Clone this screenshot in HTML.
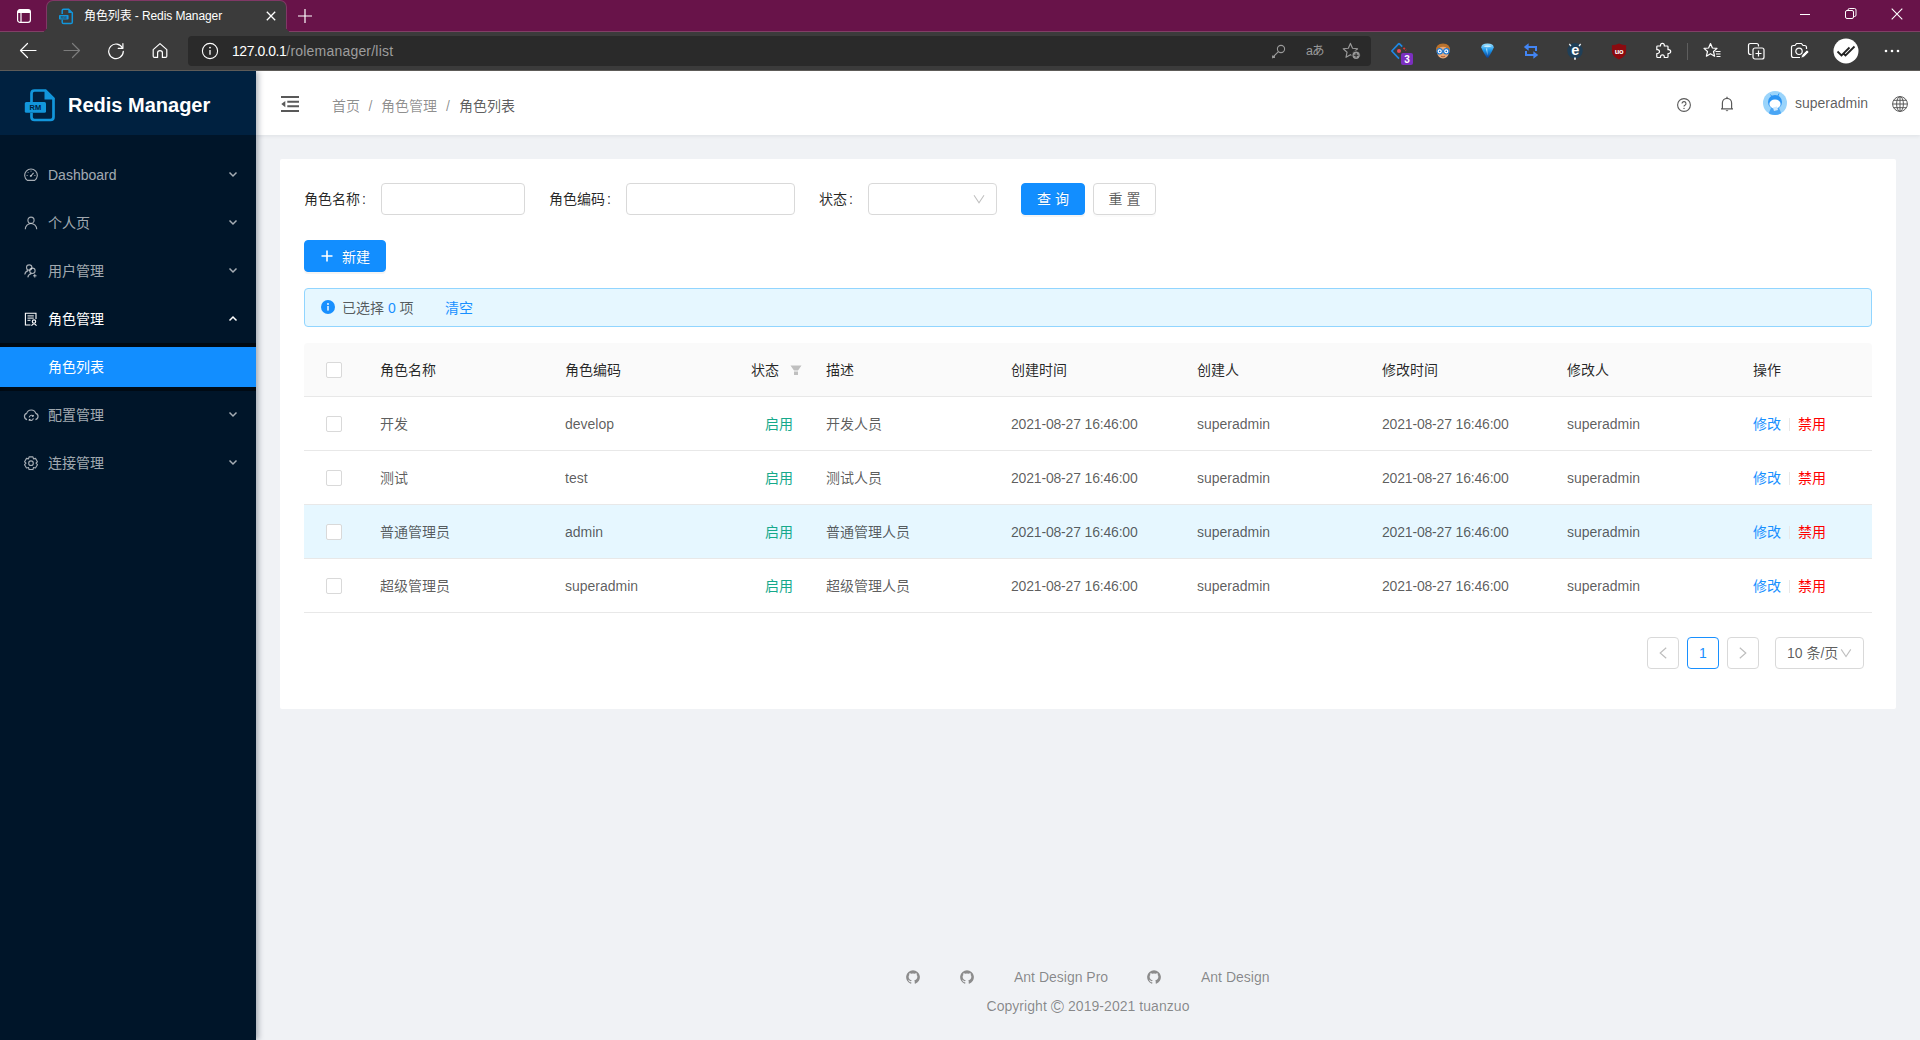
<!DOCTYPE html>
<html lang="zh-CN">
<head>
<meta charset="utf-8">
<title>角色列表 - Redis Manager</title>
<style>
*{box-sizing:border-box;margin:0;padding:0}
html,body{width:1920px;height:1040px;overflow:hidden;background:#f0f2f5}
body{font-family:"Liberation Sans","Noto Sans CJK SC",sans-serif;font-size:14px;color:rgba(0,0,0,.65);position:relative}
.abs{position:absolute}
svg{display:block}
/* ---------- browser chrome ---------- */
#titlebar{position:absolute;left:0;top:0;width:1920px;height:32px;background:#681349;border-bottom:1px solid #804066}
#tab{position:absolute;left:47px;top:1px;width:239px;height:31px;background:#3b3b3b;border-radius:6px 6px 0 0;box-shadow:0 0 0 1px rgba(255,255,255,.16)}
#tab:before,#tab:after{content:"";position:absolute;bottom:0;width:6px;height:6px}
#tab:before{left:-6px;background:radial-gradient(circle at 0 0,transparent 6px,#3b3b3b 6.5px)}
#tab:after{right:-6px;background:radial-gradient(circle at 100% 0,transparent 6px,#3b3b3b 6.5px)}
#tabtitle{position:absolute;left:37px;top:0;height:31px;line-height:30px;font-size:12px;color:#fff;white-space:nowrap;letter-spacing:-.1px}
#toolbar{position:absolute;left:0;top:32px;width:1920px;height:39px;background:#3b3b3b;border-bottom:1px solid #5d5b58;z-index:10}
#urlbar{position:absolute;left:188px;top:4px;width:1183px;height:30px;background:#2a2a2a;border-radius:4px}
#url{position:absolute;left:44px;top:0;line-height:30px;font-size:14px;color:#9d9d9d;white-space:nowrap}
#url{letter-spacing:.2px}#url b{font-weight:normal;color:#fff;letter-spacing:-.45px}
/* ---------- app ---------- */
#sider{position:absolute;left:0;top:71px;width:256px;height:969px;background:#001529;box-shadow:2px 0 6px rgba(0,21,41,.35);z-index:5}
#logo{position:absolute;left:0;top:0;width:256px;height:64px;background:#002140}
#logo h1{position:absolute;left:68px;top:0;line-height:69px;font-size:20px;font-weight:bold;color:#fff;white-space:nowrap}
.mi{position:absolute;left:0;width:256px;height:40px;line-height:40px;color:rgba(255,255,255,.65);font-size:14px}
.mi .tx{position:absolute;left:48px;top:0;white-space:nowrap}
.mi .ic{position:absolute;left:24px;top:13px;width:14px;height:14px}
.mi .ar{position:absolute;left:228px;top:16px;width:10px;height:8px}
.mi.on{color:#fff}
#sub{position:absolute;left:0;top:272px;width:256px;height:48px;background:#000c17;box-shadow:inset 0 2px 8px rgba(0,0,0,.45)}
#sel{position:absolute;left:0;top:276px;width:256px;height:40px;background:#128eff;color:#fff;line-height:40px;padding-left:48px}
#header{position:absolute;left:256px;top:71px;width:1664px;height:64px;background:#fff;box-shadow:0 1px 4px rgba(0,21,41,.08);z-index:4}
#bc{position:absolute;left:76px;top:0;line-height:71px;font-size:14px;color:rgba(0,0,0,.45);white-space:nowrap}
#bc i{font-style:normal;display:inline-block;text-align:center;width:21px;color:rgba(0,0,0,.45)}#bc i+b,#bc i.w{}
#bc b{font-weight:normal;color:rgba(0,0,0,.65)}
#uname{position:absolute;left:1539px;top:0;line-height:64px;font-size:14px;color:rgba(0,0,0,.65)}
#card{position:absolute;left:280px;top:159px;width:1616px;height:550px;background:#fff;border-radius:2px}

/* ---------- card content ---------- */
.lb{position:absolute;top:24px;line-height:33px;color:rgba(0,0,0,.85);white-space:nowrap}
.inp{position:absolute;top:24px;height:32px;border:1px solid #d9d9d9;border-radius:4px;background:#fff}
.btn{position:absolute;height:32px;line-height:30px;border-radius:4px;border:1px solid #d9d9d9;text-align:center;white-space:nowrap;background:#fff;color:rgba(0,0,0,.65);box-shadow:0 2px 0 rgba(0,0,0,.015)}
.btn.pr{background:#128eff;border-color:#128eff;color:#fff;text-shadow:0 -1px 0 rgba(0,0,0,.12);box-shadow:0 2px 0 rgba(0,0,0,.045)}
#alert{position:absolute;left:24px;top:129px;width:1568px;height:39px;background:#e6f7ff;border:1px solid #91d5ff;border-radius:4px;line-height:39px;color:rgba(0,0,0,.65)}
#alert .t{position:absolute;left:37px;top:0;white-space:nowrap}
#alert .t em{font-style:normal;color:#1890ff}
#alert .c{position:absolute;left:140px;top:0;color:#1890ff}
#tbl{position:absolute;left:24px;top:184px;width:1568px}
.tr{position:relative;height:54px;border-bottom:1px solid #e8e8e8;line-height:55px;width:1568px}
.tr.h{background:#fafafa;border-radius:4px 4px 0 0;color:rgba(0,0,0,.85)}
.tr.hv{background:#e6f7ff}
.tr span{position:absolute;top:0;white-space:nowrap}
.tr .cb{position:absolute;left:22px;top:19px;width:16px;height:16px;border:1px solid #d9d9d9;border-radius:2px;background:#fff}
.c1{left:76px}.c2{left:261px}.c3{right:1079px}.c4{left:522px}.c5{left:707px}.c6{left:893px}.c7{left:1078px}.c8{left:1263px}.c9{left:1449px}
.tr.h .c3{right:1093px}
.ed{color:#1890ff}.dl{color:#f00}.dt{letter-spacing:-.18px}
.dv{display:inline-block;width:1px;height:13px;background:#e8e8e8;margin:0 8px;vertical-align:-2px}
.pg{position:absolute;top:478px;height:32px;border:1px solid #d9d9d9;border-radius:4px;background:#fff;line-height:30px;text-align:center}

#footer{position:absolute;left:256px;top:960px;width:1664px;color:rgba(0,0,0,.45);font-size:14px}
#footer .fl{position:absolute;left:758px;top:6px;height:22px;line-height:22px}
#footer .fl span{position:absolute;top:0;white-space:nowrap}
#footer .cp{position:absolute;left:0;width:1664px;text-align:center;top:35px;line-height:22px}
#footer .cp{letter-spacing:.05px}#footer .cc{font-size:18px;line-height:14px;vertical-align:-2px;letter-spacing:0}
.cl{margin-left:2px}
</style>
</head>
<body>
<!-- browser chrome -->
<div id="titlebar">

  <svg class="abs" style="left:16px;top:8px" width="16" height="16" viewBox="0 0 16 16"><rect x="1.600" y="1.600" width="12.800" height="12.800" rx="2.400" fill="none" stroke="#fff" stroke-width="1.200"/><path d="M1.600 4.200Q1.600 1.600 4 1.600H12Q14.400 1.600 14.400 4.200V5H1.600Z" fill="#fff"/><path d="M5 5V14.400" stroke="#fff" stroke-width="1.200"/></svg>
  <svg class="abs" style="left:297px;top:8px" width="16" height="16" viewBox="0 0 16 16"><path d="M8 1V15M1 8H15" stroke="#fff" stroke-width="1.2"/></svg>
  <svg class="abs" style="left:1799px;top:9px" width="12" height="12" viewBox="0 0 12 12"><path d="M1 5.5H11" stroke="#fff" stroke-width="1"/></svg>
  <svg class="abs" style="left:1845px;top:8px" width="12" height="12" viewBox="0 0 12 12"><rect x="0.5" y="2.5" width="8" height="8" rx="1.5" fill="none" stroke="#fff"/><path d="M3 2.5V2Q3 .5 4.5 .5H9.5Q11 .5 11 2V7Q11 8.5 9.5 8.5H9" fill="none" stroke="#fff"/></svg>
  <svg class="abs" style="left:1891px;top:8px" width="12" height="12" viewBox="0 0 12 12"><path d="M.7 .7L11.3 11.3M11.3 .7L.7 11.3" stroke="#fff" stroke-width="1.1"/></svg>
  <div id="tab"><svg class="abs" style="left:11px;top:7px" width="16" height="17" viewBox="0 0 16 17"><path d="M4.2 6V2.6Q4.2 1.2 5.6 1.2H10.6L14.3 4.9V14.2Q14.3 15.6 12.9 15.6H5.6Q4.2 15.6 4.2 14.2V11.8" fill="none" stroke="#1296db" stroke-width="1.5"/><path d="M10.4 1.2V5.1H14.3Z" fill="#1296db"/><rect x="1" y="6.900" width="9.600" height="4.600" rx=".8" fill="#1296db"/><text x="5.800" y="10.600" font-family="Liberation Sans,sans-serif" font-size="4" font-weight="bold" fill="#2a4a66" text-anchor="middle">RM</text></svg>
<svg class="abs" style="left:219px;top:10px" width="10" height="10" viewBox="0 0 10 10"><path d="M.8 .8L9.2 9.2M9.2 .8L.8 9.2" stroke="#fff" stroke-width="1.3"/></svg><div id="tabtitle">角色列表 - Redis Manager</div></div>
</div>
<div id="toolbar">

  <svg class="abs" style="left:19px;top:10px" width="18" height="17" viewBox="0 0 18 17"><path d="M1.5 8.5H17M8.5 1.5L1.5 8.5L8.5 15.5" fill="none" stroke="#fff" stroke-width="1.2" stroke-linecap="round" stroke-linejoin="round"/></svg>
  <svg class="abs" style="left:63px;top:10px" width="18" height="17" viewBox="0 0 18 17"><path d="M16.5 8.5H1M9.5 1.5L16.5 8.5L9.5 15.5" fill="none" stroke="#7c7c7c" stroke-width="1.2" stroke-linecap="round" stroke-linejoin="round"/></svg>
  <svg class="abs" style="left:107px;top:10px" width="18" height="18" viewBox="0 0 18 18"><path d="M15.6 6.2A7.3 7.3 0 1 0 16.3 9.3" fill="none" stroke="#fff" stroke-width="1.2" stroke-linecap="round"/><path d="M15.9 1.6V6.3H11.2" fill="none" stroke="#fff" stroke-width="1.2" stroke-linecap="round" stroke-linejoin="round"/></svg>
  <svg class="abs" style="left:152px;top:10px" width="16" height="17" viewBox="0 0 16 17"><path d="M1.2 7.6L8 1.6L14.8 7.6V14.2Q14.8 15.4 13.6 15.4H10.4V10.8Q10.4 8.6 8 8.6Q5.6 8.6 5.6 10.8V15.4H2.4Q1.2 15.4 1.2 14.2Z" fill="none" stroke="#fff" stroke-width="1.2" stroke-linejoin="round"/></svg>

  <!-- extension icons -->
  <svg class="abs" style="left:1389px;top:8px" width="26" height="26" viewBox="0 0 26 26"><path d="M10 3.400L2.800 11L10 18.600" fill="none" stroke="#1e88e5" stroke-width="1.700" stroke-linejoin="round"/><path d="M10 3.400L13.200 6.600" stroke="#1e88e5" stroke-width="1.700"/><path d="M14.500 7.800L17 10.500" stroke="#e53935" stroke-width="1.700" stroke-dasharray="2 1.200"/><circle cx="10" cy="11" r="2" fill="#ef4a5a"/><rect x="12" y="13" width="12" height="12" rx="2" fill="#7b2fbf"/><text x="18" y="22.600" font-family="Liberation Sans,sans-serif" font-size="10" font-weight="bold" fill="#fff" text-anchor="middle">3</text></svg>
  <svg class="abs" style="left:1435px;top:10px" width="16" height="18" viewBox="0 0 16 18"><path d="M1 9Q.5 1.500 8 1.500Q15.500 1.500 15 9L14 11H2Z" fill="#b9722e"/><ellipse cx="8" cy="10.500" rx="5.800" ry="6" fill="#e9a877"/><path d="M2.500 6.500Q8 2.500 13.500 6.500L13 4Q8 1.800 3 4Z" fill="#b9722e"/><circle cx="4.700" cy="9.300" r="2.700" fill="#fff" stroke="#1976d2" stroke-width="1.200"/><circle cx="11.300" cy="9.300" r="2.700" fill="#fff" stroke="#1976d2" stroke-width="1.200"/><circle cx="4.700" cy="9.300" r=".9" fill="#1565c0"/><circle cx="11.300" cy="9.300" r=".9" fill="#1565c0"/><path d="M6 14.300Q8 15.300 10 14.300" fill="none" stroke="#a0522d" stroke-width=".8"/></svg>
  <svg class="abs" style="left:1480px;top:11px" width="15" height="16" viewBox="0 0 15 16"><defs><linearGradient id="gm" x1="0" y1="0" x2="0" y2="1"><stop offset="0" stop-color="#9be0ff"/><stop offset=".45" stop-color="#1e9bf0"/><stop offset="1" stop-color="#0a3f95"/></linearGradient></defs><path d="M1.200 4.600Q1.400 .6 7.500 .6Q13.600 .6 13.800 4.600Q12 9 8.300 14.800H6.700Q3 9 1.200 4.600Z" fill="url(#gm)"/><path d="M3.500 3.300Q7.500 1 11.500 3.300Q7.500 5 3.500 3.300Z" fill="#d6f3ff" opacity=".85"/><path d="M6 5.500L7.500 12.500L7.200 5.500Z" fill="#e3f6ff" opacity=".8"/></svg>
  <svg class="abs" style="left:1523px;top:10px" width="16" height="18" viewBox="0 0 16 18"><path d="M13 9V5H5" fill="none" stroke="#4285f4" stroke-width="2"/><path d="M.8 5L5.600 1.200V8.800Z" fill="#4285f4"/><path d="M3 9V13H11" fill="none" stroke="#4285f4" stroke-width="2"/><path d="M15.200 13L10.400 9.200V16.800Z" fill="#4285f4"/></svg>
  <svg class="abs" style="left:1566px;top:9px" width="18" height="20" viewBox="0 0 18 20"><circle cx="9" cy="9.800" r="7.700" fill="#1f3f58"/><path d="M3.300 3L5 5M14.700 3L13 5" stroke="#e8eef2" stroke-width="1.300"/><path d="M9 16.500V18.800" stroke="#e8eef2" stroke-width="1.800"/><text x="9.300" y="14.300" font-family="Liberation Sans,sans-serif" font-size="14.500" font-weight="bold" fill="#fff" text-anchor="middle">e</text></svg>
  <svg class="abs" style="left:1611px;top:11px" width="16" height="17" viewBox="0 0 16 17"><path d="M8 .6Q5 2.300 .9 2.300V8Q.9 13.300 8 16.400Q15.100 13.300 15.100 8V2.300Q11 2.300 8 .6Z" fill="#8b0a0f"/><text x="8" y="10.800" font-family="Liberation Sans,sans-serif" font-size="7.500" font-weight="bold" fill="#fff" text-anchor="middle" letter-spacing="-.3">uo</text></svg>
  <svg class="abs" style="left:1654px;top:10px" width="18" height="18" viewBox="0 0 18 18"><path d="M6.500 3.200A1.900 1.900 0 1 1 10.300 3.200V4H13.200Q14 4 14 4.800V7.700H14.800A1.900 1.900 0 1 1 14.800 11.500H14V14.700Q14 15.500 13.200 15.500H10.300V14.700A1.900 1.900 0 1 0 6.500 14.700V15.500H3.600Q2.800 15.500 2.800 14.700V11.500H3.600A1.900 1.900 0 1 0 3.600 7.700H2.800V4.800Q2.800 4 3.600 4H6.500Z" fill="none" stroke="#fff" stroke-width="1.200" stroke-linejoin="round"/></svg>
  <div class="abs" style="left:1687px;top:11px;width:1px;height:17px;background:#5e5e5e"></div>
  <svg class="abs" style="left:1703px;top:10px" width="19" height="18" viewBox="0 0 19 18"><path d="M7.500 1.500L9.400 6L14 6.400L10.500 9.500L11.600 14.200L7.500 11.700L3.400 14.200L4.500 9.500L1 6.400L5.600 6Z" fill="none" stroke="#fff" stroke-width="1.200" stroke-linejoin="round"/><path d="M12.500 9.500H17.500M13 12H17.500M13.500 14.500H17.500" stroke="#fff" stroke-width="1.100"/></svg>
  <svg class="abs" style="left:1747px;top:10px" width="19" height="18" viewBox="0 0 19 18"><path d="M4.500 12.500H3.500Q1.500 12.500 1.500 10.500V3.500Q1.500 1.500 3.500 1.500H9.500Q11.500 1.500 11.500 3.500V4.500" fill="none" stroke="#fff" stroke-width="1.200"/><rect x="6" y="6" width="11" height="11" rx="2" fill="none" stroke="#fff" stroke-width="1.200"/><path d="M11.500 8.500V14.500M8.500 11.500H14.500" stroke="#fff" stroke-width="1.200"/></svg>
  <svg class="abs" style="left:1790px;top:10px" width="20" height="18" viewBox="0 0 20 18"><path d="M10 15.500H3.500Q1.500 15.500 1.500 13.500V5.500Q1.500 3.500 3.500 3.500H5L6.500 1.500H11.500L13 3.500H14.500Q16.500 3.500 16.500 5.500V7" fill="none" stroke="#fff" stroke-width="1.200" stroke-linejoin="round"/><circle cx="9" cy="9.300" r="3.200" fill="none" stroke="#fff" stroke-width="1.200"/><path d="M11 16L12 13L17 8L19 10L14 15Z" fill="#fff" stroke="#3b3b3b" stroke-width=".6"/></svg>
  <svg class="abs" style="left:1833px;top:6px" width="26" height="26" viewBox="0 0 26 26"><circle cx="13" cy="13" r="12.500" fill="#fff"/><path d="M4.500 13.500L8.500 17.500L16.500 9.500M10.500 15.500L12.500 17.500L21.500 8.500" fill="none" stroke="#222" stroke-width="1.800"/></svg>
  <svg class="abs" style="left:1884px;top:17px" width="16" height="4" viewBox="0 0 16 4"><circle cx="2" cy="2" r="1.300" fill="#fff"/><circle cx="8" cy="2" r="1.300" fill="#fff"/><circle cx="14" cy="2" r="1.300" fill="#fff"/></svg>
  <div id="urlbar"><svg class="abs" style="left:13px;top:6px" width="18" height="18" viewBox="0 0 18 18"><circle cx="9" cy="9" r="7.6" fill="none" stroke="#fff" stroke-width="1.1"/><path d="M9 8V12.8" stroke="#fff" stroke-width="1.3"/><circle cx="9" cy="5.6" r=".9" fill="#fff"/></svg>
<svg class="abs" style="left:1083px;top:8px" width="15" height="15" viewBox="0 0 15 15"><circle cx="10" cy="5" r="3.6" fill="none" stroke="#9a9a9a" stroke-width="1.1"/><path d="M7.4 7.6L1.6 13.4V11.6M3.4 11.6V13.4H1.6" fill="none" stroke="#9a9a9a" stroke-width="1.1"/></svg>
<div class="abs" style="left:1118px;top:0;line-height:31px;font-size:12.5px;color:#9a9a9a;letter-spacing:-1px;white-space:nowrap;font-family:'Liberation Sans','Noto Sans CJK JP',sans-serif">aあ</div>
<svg class="abs" style="left:1154px;top:6px" width="20" height="19" viewBox="0 0 19 18"><path d="M8 1.3L10 5.9L14.8 6.4L11.2 9.7L12.2 14.5L8 12L3.8 14.5L4.8 9.7L1.2 6.4L6 5.9Z" fill="none" stroke="#9a9a9a" stroke-width="1.1" stroke-linejoin="round"/><circle cx="13.4" cy="12.6" r="4" fill="#9a9a9a" stroke="#2a2a2a" stroke-width="1"/><path d="M13.4 10.4V14.8M11.2 12.6H15.6" stroke="#2a2a2a" stroke-width="1"/></svg><div id="url"><b>127.0.0.1</b>/rolemanager/list</div></div>
</div>
<!-- sidebar -->
<div id="sider">
  <div id="logo"><svg class="abs" style="left:24px;top:17px" width="33" height="34" viewBox="0 0 33 34"><path d="M7.500 14V5.500Q7.500 2.500 10.500 2.500H21.500L29.500 10.500V29Q29.500 32 26.500 32H10.500Q7.500 32 7.500 29V25" fill="none" stroke="#1296db" stroke-width="2.700"/><path d="M20.500 2V11.500H30Z" fill="#1296db"/><rect x=".8" y="14" width="21.200" height="10.800" rx="1.500" fill="#1296db"/><text x="11.400" y="22.400" font-family="Liberation Sans,sans-serif" font-size="7.500" font-weight="bold" fill="#002140" text-anchor="middle">RM</text></svg><h1>Redis Manager</h1></div>
  <div class="mi" style="top:84px"><svg class="abs" style="left:24px;top:13px" width="14" height="14" viewBox="0 0 14 14" fill="none" stroke="currentColor" stroke-width="1.1"><path d="M3.300 12.400A6.300 6.300 0 1 1 10.700 12.400Z" stroke-linejoin="round"/><path d="M7 7.800L9.600 4.900" stroke-width="1.200"/><circle cx="6.800" cy="8" r="1" fill="currentColor" stroke="none"/><path d="M7 2.600V3.600M2.600 7.500H3.600M10.400 7.500H11.400M3.900 4.300L4.600 5" stroke-width="1"/></svg><span class="tx">Dashboard</span><svg class="abs" style="left:228px;top:16px" width="10" height="7" viewBox="0 0 10 7"><path d="M1.500 1.500L5 5L8.500 1.500" fill="none" stroke="currentColor" stroke-width="1.500"/></svg></div>
  <div class="mi" style="top:132px"><svg class="abs" style="left:24px;top:13px" width="14" height="14" viewBox="0 0 14 14" fill="none" stroke="currentColor" stroke-width="1.1"><circle cx="7" cy="4.200" r="3.100"/><path d="M1.300 13.200A5.700 5.700 0 0 1 12.700 13.200"/></svg><span class="tx">个人页</span><svg class="abs" style="left:228px;top:16px" width="10" height="7" viewBox="0 0 10 7"><path d="M1.500 1.500L5 5L8.500 1.500" fill="none" stroke="currentColor" stroke-width="1.500"/></svg></div>
  <div class="mi" style="top:180px"><svg class="abs" style="left:24px;top:13px" width="14" height="14" viewBox="0 0 14 14" fill="none" stroke="currentColor" stroke-width="1.1"><circle cx="5.200" cy="3.600" r="2.700"/><path d="M.8 10.500A4.600 4.600 0 0 1 4.200 6.600"/><circle cx="8.400" cy="6.800" r="2.700"/><path d="M3.800 13.300A4.700 4.700 0 0 1 7.400 9.600"/><path d="M10.800 10V13.600M9 11.800H12.600" stroke-width="1"/></svg><span class="tx">用户管理</span><svg class="abs" style="left:228px;top:16px" width="10" height="7" viewBox="0 0 10 7"><path d="M1.500 1.500L5 5L8.500 1.500" fill="none" stroke="currentColor" stroke-width="1.500"/></svg></div>
  <div class="mi on" style="top:228px"><svg class="abs" style="left:24px;top:13px" width="14" height="14" viewBox="0 0 14 14" fill="none" stroke="currentColor" stroke-width="1.1"><path d="M6.500 13H1.400V1.200H12V7"/><path d="M3.500 3.900H9.800M3.500 6.100H9.800" stroke-width="1"/><path d="M3.500 8.300H6.500" stroke-width="1"/><circle cx="10" cy="9.600" r="1.700"/><path d="M7.600 13.800A2.500 2.500 0 0 1 12.400 13.800"/></svg><span class="tx">角色管理</span><svg class="abs" style="left:228px;top:16px" width="10" height="7" viewBox="0 0 10 7"><path d="M1.500 5.500L5 2L8.500 5.500" fill="none" stroke="currentColor" stroke-width="1.500"/></svg></div>
  <div id="sub"></div>
  <div id="sel">角色列表</div>
  <div class="mi" style="top:324px"><svg class="abs" style="left:22.5px;top:12.6px" width="16.5" height="15.4" viewBox="-0.5 0 15 14" fill="none" stroke="currentColor" stroke-width="1.1"><path d="M3.200 10.500A2.900 2.900 0 0 1 2.800 4.900A4.400 4.400 0 0 1 11.200 4.900A2.900 2.900 0 0 1 10.800 10.500" /><path d="M5.100 8.600A2.100 2.100 0 0 1 8.800 7.400M8.900 9.400A2.100 2.100 0 0 1 5.200 10.600" stroke-width="1"/><path d="M8.900 6.300V7.600H7.600M5.100 11.700V10.400H6.400" stroke-width=".9"/></svg><span class="tx">配置管理</span><svg class="abs" style="left:228px;top:16px" width="10" height="7" viewBox="0 0 10 7"><path d="M1.500 1.500L5 5L8.500 1.500" fill="none" stroke="currentColor" stroke-width="1.500"/></svg></div>
  <div class="mi" style="top:372px"><svg class="abs" style="left:24px;top:13px" width="14" height="15" viewBox="0 0 14 15" fill="none" stroke="currentColor" stroke-width="1.1"><path d="M8.95 0.89L5.05 0.89L4.52 2.86L4.48 2.88L2.51 2.36L0.56 5.74L2.00 7.18L2.00 7.22L0.56 8.66L2.51 12.04L4.48 11.52L4.52 11.54L5.05 13.51L8.95 13.51L9.48 11.54L9.52 11.52L11.49 12.04L13.44 8.66L12.00 7.22L12.00 7.18L13.44 5.74L11.49 2.36L9.52 2.88L9.48 2.86Z" stroke-linejoin="round"/><circle cx="7" cy="7.200" r="2.300"/></svg><span class="tx">连接管理</span><svg class="abs" style="left:228px;top:16px" width="10" height="7" viewBox="0 0 10 7"><path d="M1.500 1.500L5 5L8.500 1.500" fill="none" stroke="currentColor" stroke-width="1.500"/></svg></div>
</div>
<!-- header -->
<div id="header">

  <svg class="abs" style="left:25px;top:25px" width="18" height="16" viewBox="0 0 18 16"><path d="M0 1H18M6.300 5.800H18M6.300 10.300H18M0 15H18" stroke="#595959" stroke-width="1.900"/><path d="M.3 8.050L4.300 4.900V11.200Z" fill="#595959"/></svg>
  <svg class="abs" style="left:1421px;top:27px" width="14" height="14" viewBox="0 0 14 14"><circle cx="7" cy="7" r="6.400" fill="none" stroke="#595959" stroke-width="1.100"/><path d="M5 5.600A2 2 0 1 1 7.600 7.500Q7 7.800 7 8.600" fill="none" stroke="#595959" stroke-width="1.100"/><circle cx="7" cy="10.400" r=".7" fill="#595959"/></svg>
  <svg class="abs" style="left:1464px;top:25px" width="14" height="16" viewBox="0 0 14 16"><path d="M1 12.800H13M2.400 12.800V7A4.600 4.600 0 0 1 11.600 7V12.800" fill="none" stroke="#595959" stroke-width="1.200" stroke-linejoin="round"/><path d="M7 .8V2.400" stroke="#595959" stroke-width="1.200"/><path d="M5.600 14.200A1.500 1.500 0 0 0 8.400 14.200Z" fill="#595959"/></svg>
  <svg class="abs" style="left:1507px;top:20px" width="24" height="24" viewBox="0 0 24 24"><circle cx="12" cy="12" r="12" fill="#9ad4fb"/><clipPath id="avc"><circle cx="12" cy="12" r="12"/></clipPath><g clip-path="url(#avc)"><path d="M7.500 3.500L9.500 6.500M16 2.500L14.500 6" stroke="#2b94f3" stroke-width="1"/><circle cx="12" cy="11" r="7" fill="#2b94f3"/><path d="M5 24L8 17H16L19 24Z" fill="#4aa6f5"/><ellipse cx="12" cy="13" rx="5.600" ry="4.600" fill="#fff"/><path d="M10 16.500L14 15.500L15 19L11 20Z" fill="#cfe8fc"/></g></svg>
  <svg class="abs" style="left:1636px;top:25px" width="16" height="16" viewBox="0 0 16 16"><g fill="none" stroke="#595959" stroke-width="1"><circle cx="8" cy="8" r="7.400"/><ellipse cx="8" cy="8" rx="3.400" ry="7.400"/><path d="M8 .6V15.400M.6 8H15.400M1.700 4.300H14.300M1.700 11.700H14.300"/></g></svg>
  <div id="bc">首页<i>/</i>角色管理<i style="width:22px">/</i><b>角色列表</b></div>
  <div id="uname">superadmin</div>
</div>
<!-- card -->
<div id="card">

<div class="lb" style="left:24px">角色名称<span class="cl">:</span></div><div class="inp" style="left:101px;width:144px"></div>
<div class="lb" style="left:269px">角色编码<span class="cl">:</span></div><div class="inp" style="left:346px;width:169px"></div>
<div class="lb" style="left:539px">状态<span class="cl">:</span></div><div class="inp" style="left:588px;width:129px"><svg class="abs" style="left:104px;top:9px" width="12" height="12" viewBox="0 0 12 12"><path d="M1 2.300L6 9.700L11 2.300" fill="none" stroke="#bfbfbf" stroke-width="1.050"/></svg></div>
<div class="btn pr" style="left:741px;top:24px;width:64px">查 询</div>
<div class="btn" style="left:813px;top:24px;width:63px">重 置</div>
<div class="btn pr" style="left:24px;top:81px;width:82px;text-align:left;padding-left:15px;line-height:32px"><svg class="abs" style="left:16px;top:9px" width="12" height="12" viewBox="0 0 12 12"><path d="M6 0.5V11.5M0.5 6H11.5" stroke="#fff" stroke-width="1.6"/></svg><span style="margin-left:22px">新建</span></div>
<div id="alert"><svg class="abs" style="left:16px;top:11px" width="14" height="14" viewBox="0 0 14 14"><circle cx="7" cy="7" r="7" fill="#1890ff"/><rect x="6.3" y="6" width="1.4" height="4.6" fill="#fff"/><circle cx="7" cy="4" r="0.9" fill="#fff"/></svg><span class="t">已选择 <em>0</em> 项</span><span class="c">清空</span></div>
<div id="tbl">
<div class="tr h"><i class="cb"></i><span class="c1">角色名称</span><span class="c2">角色编码</span><span class="c3">状态</span><svg class="abs" style="left:486px;top:22px" width="12" height="11" viewBox="0 0 12 11"><path d="M0.5 0.5H11.5L8 5.5H4Z M4 6.5H8V10H4Z" fill="#bfbfbf"/></svg><span class="c4">描述</span><span class="c5">创建时间</span><span class="c6">创建人</span><span class="c7">修改时间</span><span class="c8">修改人</span><span class="c9">操作</span></div>
<div class="tr"><i class="cb"></i><span class="c1">开发</span><span class="c2">develop</span><span class="c3" style="color:#16a98b">启用</span><span class="c4">开发人员</span><span class="c5 dt">2021-08-27 16:46:00</span><span class="c6">superadmin</span><span class="c7 dt">2021-08-27 16:46:00</span><span class="c8">superadmin</span><span class="c9"><a class="ed">修改</a><i class="dv"></i><a class="dl">禁用</a></span></div>
<div class="tr"><i class="cb"></i><span class="c1">测试</span><span class="c2">test</span><span class="c3" style="color:#16a98b">启用</span><span class="c4">测试人员</span><span class="c5 dt">2021-08-27 16:46:00</span><span class="c6">superadmin</span><span class="c7 dt">2021-08-27 16:46:00</span><span class="c8">superadmin</span><span class="c9"><a class="ed">修改</a><i class="dv"></i><a class="dl">禁用</a></span></div>
<div class="tr hv"><i class="cb"></i><span class="c1">普通管理员</span><span class="c2">admin</span><span class="c3" style="color:#16a98b">启用</span><span class="c4">普通管理人员</span><span class="c5 dt">2021-08-27 16:46:00</span><span class="c6">superadmin</span><span class="c7 dt">2021-08-27 16:46:00</span><span class="c8">superadmin</span><span class="c9"><a class="ed">修改</a><i class="dv"></i><a class="dl">禁用</a></span></div>
<div class="tr"><i class="cb"></i><span class="c1">超级管理员</span><span class="c2">superadmin</span><span class="c3" style="color:#16a98b">启用</span><span class="c4">超级管理人员</span><span class="c5 dt">2021-08-27 16:46:00</span><span class="c6">superadmin</span><span class="c7 dt">2021-08-27 16:46:00</span><span class="c8">superadmin</span><span class="c9"><a class="ed">修改</a><i class="dv"></i><a class="dl">禁用</a></span></div>
</div>
<div class="pg" style="left:1367px;width:32px"><svg class="abs" style="left:10px;top:9px" width="12" height="12" viewBox="0 0 12 12"><path d="M8.200 .8L2.200 6L8.200 11.200" fill="none" stroke="#bdbdbd" stroke-width="1.150"/></svg></div>
<div class="pg" style="left:1407px;width:32px;border-color:#1890ff;color:#1890ff">1</div>
<div class="pg" style="left:1447px;width:32px"><svg class="abs" style="left:10px;top:9px" width="12" height="12" viewBox="0 0 12 12"><path d="M1.800 .8L7.800 6L1.800 11.200" fill="none" stroke="#bdbdbd" stroke-width="1.150"/></svg></div>
<div class="pg" style="left:1495px;width:89px;text-align:left;padding-left:11px">10 条/页<svg class="abs" style="left:64px;top:9px" width="12" height="12" viewBox="0 0 12 12"><path d="M1.200 2.400L6 9.600L10.800 2.400" fill="none" stroke="#bfbfbf" stroke-width="1.050"/></svg></div>

</div>
<div id="footer">
<svg class="abs" style="left:650px;top:10px" width="14" height="14" viewBox="0 0 14 14"><path d="M7 .3A6.850 6.850 0 0 0 4.840 13.650C5.180 13.710 5.300 13.500 5.300 13.320V12.150C3.400 12.560 3 11.240 3 11.240C2.690 10.450 2.240 10.240 2.240 10.240C1.620 9.820 2.290 9.830 2.290 9.830C2.970 9.880 3.330 10.530 3.330 10.530C3.940 11.580 4.930 11.270 5.320 11.100C5.380 10.660 5.560 10.350 5.750 10.180C4.230 10.010 2.630 9.420 2.630 6.800C2.630 6.050 2.900 5.440 3.340 4.960C3.270 4.790 3.030 4.090 3.400 3.150C3.400 3.150 3.980 2.960 5.290 3.850A6.500 6.500 0 0 1 8.710 3.850C10.020 2.960 10.600 3.150 10.600 3.150C10.970 4.090 10.730 4.790 10.660 4.960C11.100 5.440 11.370 6.050 11.370 6.800C11.370 9.430 9.770 10.010 8.240 10.180C8.490 10.390 8.710 10.810 8.710 11.450V13.320C8.710 13.500 8.830 13.720 9.180 13.650A6.850 6.850 0 0 0 7 .3Z" fill="#8c8c8c"/></svg><svg class="abs" style="left:704px;top:10px" width="14" height="14" viewBox="0 0 14 14"><path d="M7 .3A6.850 6.850 0 0 0 4.840 13.650C5.180 13.710 5.300 13.500 5.300 13.320V12.150C3.400 12.560 3 11.240 3 11.240C2.690 10.450 2.240 10.240 2.240 10.240C1.620 9.820 2.290 9.830 2.290 9.830C2.970 9.880 3.330 10.530 3.330 10.530C3.940 11.580 4.930 11.270 5.320 11.100C5.380 10.660 5.560 10.350 5.750 10.180C4.230 10.010 2.630 9.420 2.630 6.800C2.630 6.050 2.900 5.440 3.340 4.960C3.270 4.790 3.030 4.090 3.400 3.150C3.400 3.150 3.980 2.960 5.290 3.850A6.500 6.500 0 0 1 8.710 3.850C10.020 2.960 10.600 3.150 10.600 3.150C10.970 4.090 10.730 4.790 10.660 4.960C11.100 5.440 11.370 6.050 11.370 6.800C11.370 9.430 9.770 10.010 8.240 10.180C8.490 10.390 8.710 10.810 8.710 11.450V13.320C8.710 13.500 8.830 13.720 9.180 13.650A6.850 6.850 0 0 0 7 .3Z" fill="#8c8c8c"/></svg><svg class="abs" style="left:891px;top:10px" width="14" height="14" viewBox="0 0 14 14"><path d="M7 .3A6.850 6.850 0 0 0 4.840 13.650C5.180 13.710 5.300 13.500 5.300 13.320V12.150C3.400 12.560 3 11.240 3 11.240C2.690 10.450 2.240 10.240 2.240 10.240C1.620 9.820 2.290 9.830 2.290 9.830C2.970 9.880 3.330 10.530 3.330 10.530C3.940 11.580 4.930 11.270 5.320 11.100C5.380 10.660 5.560 10.350 5.750 10.180C4.230 10.010 2.630 9.420 2.630 6.800C2.630 6.050 2.900 5.440 3.340 4.960C3.270 4.790 3.030 4.090 3.400 3.150C3.400 3.150 3.980 2.960 5.290 3.850A6.500 6.500 0 0 1 8.710 3.850C10.020 2.960 10.600 3.150 10.600 3.150C10.970 4.090 10.730 4.790 10.660 4.960C11.100 5.440 11.370 6.050 11.370 6.800C11.370 9.430 9.770 10.010 8.240 10.180C8.490 10.390 8.710 10.810 8.710 11.450V13.320C8.710 13.500 8.830 13.720 9.180 13.650A6.850 6.850 0 0 0 7 .3Z" fill="#8c8c8c"/></svg>
<div class="fl"><span style="left:0">Ant Design Pro</span><span style="left:187px">Ant Design</span></div>
<div class="cp">Copyright <span class="cc">©</span> 2019-2021 tuanzuo</div>
</div>
</body>
</html>
